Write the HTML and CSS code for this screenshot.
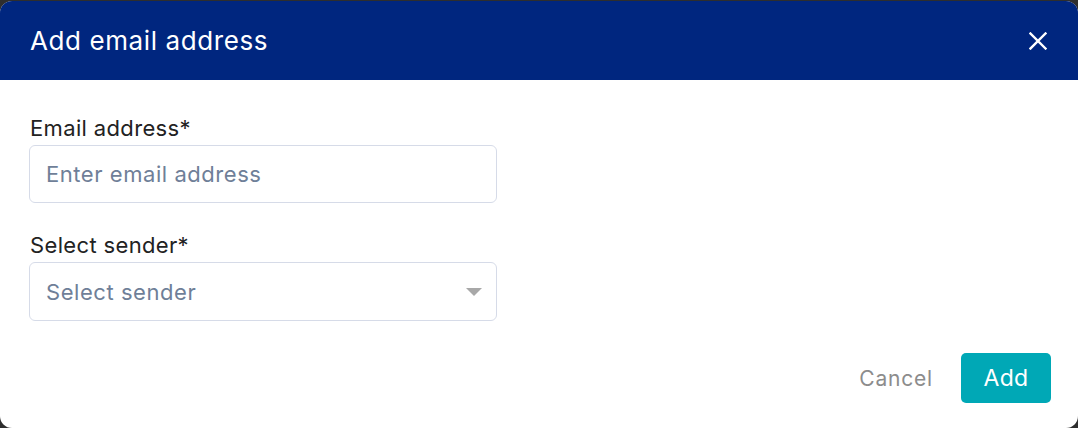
FILE: index.html
```html
<!DOCTYPE html>
<html>
<head>
<meta charset="utf-8">
<link rel="stylesheet" href="styles.css">
</head>
<body>
<div class="dialog">
  <div class="header">
    <h1 class="title">Add email address</h1>
    <button class="close" aria-label="Close">
      <svg width="18" height="18" viewBox="0 0 18 18"><path d="M1.5 1.5 L16.5 16.5 M16.5 1.5 L1.5 16.5" stroke="#fff" stroke-width="2.4" stroke-linecap="square" fill="none"/></svg>
    </button>
  </div>
  <div class="body">
    <div class="field">
      <label class="label">Email address*</label>
      <div class="input"><span class="placeholder">Enter email address</span></div>
    </div>
    <div class="field">
      <label class="label">Select sender*</label>
      <div class="input select"><span class="placeholder">Select sender</span><span class="caret"></span></div>
    </div>
  </div>
  <div class="footer">
    <button class="btn-cancel">Cancel</button>
    <button class="btn-add">Add</button>
  </div>
</div>
</body>
</html>
```
FILE: styles.css
```css
html, body {
  margin: 0;
  padding: 0;
  background: #2e2e2e;
  height: 100%;
}
body {
  padding-top: 1px;
  box-sizing: border-box;
  font-family: "Inter", "Open Sans", sans-serif;
}
.dialog {
  background: #fff;
  border-radius: 12px;
  overflow: hidden;
  height: 427px;
  display: flex;
  flex-direction: column;
}
.header {
  background: #00267f;
  height: 79px;
  display: flex;
  align-items: center;
  justify-content: space-between;
  padding: 0 30px 0 30px;
}
.title {
  margin: 0;
  color: #fff;
  font-size: 26px;
  font-weight: 400;
  letter-spacing: 0.6px;
}
.close {
  background: none;
  border: 0;
  padding: 0;
  width: 18px;
  height: 18px;
  margin-right: 1px;
  cursor: pointer;
}
.close svg { display: block; }
.body {
  padding: 34px 29px 0 29px;
  display: flex;
  flex-direction: column;
  gap: 28px;
}
.field {
  display: flex;
  flex-direction: column;
  gap: 3px;
}
.label {
  color: #222;
  font-size: 22px;
  line-height: 28px;
  padding-left: 1px;
  letter-spacing: 0.35px;
}
.input {
  height: 56px;
  border: 1px solid #d6dbe8;
  border-radius: 6px;
  display: flex;
  align-items: center;
  padding: 0 16px;
  box-sizing: content-box;
  width: 434px;
}
.placeholder {
  color: #6f7f98;
  font-size: 22px;
  letter-spacing: 0.55px;
}
.select {
  height: 57px;
  justify-content: space-between;
}
.caret {
  width: 0;
  height: 0;
  border-left: 8px solid transparent;
  border-right: 8px solid transparent;
  border-top: 8px solid #a8a8a8;
  margin-right: -2px;
}
.footer {
  margin-top: auto;
  display: flex;
  justify-content: flex-end;
  align-items: center;
  gap: 28px;
  padding: 0 27px 25px 0;
}
.btn-cancel {
  background: none;
  border: 0;
  color: #8c8c8c;
  font-family: inherit;
  font-size: 21px;
  padding: 0;
  letter-spacing: 0.8px;
}
.btn-add {
  background: #00a8b6;
  color: #fff;
  border: 0;
  border-radius: 5px;
  width: 90px;
  height: 50px;
  font-family: inherit;
  font-size: 23px;
  letter-spacing: 0.3px;
}
```
